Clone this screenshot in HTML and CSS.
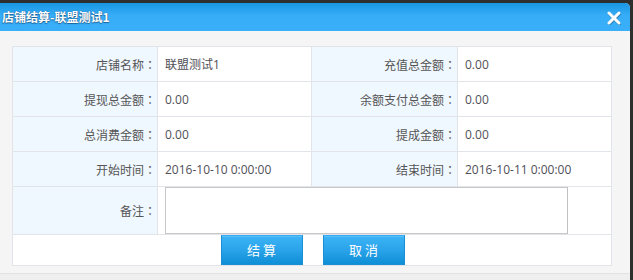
FILE: index.html
```html
<!DOCTYPE html>
<html>
<head>
<meta charset="utf-8">
<link rel="stylesheet" href="styles.css">
</head>
<body>
<div class="dialog">
  <div class="titlebar">
    <span class="title">店铺结算-联盟测试1</span>
    <svg class="close" width="14" height="14" viewBox="0 0 14 14"><path d="M2 2 L12 12 M12 2 L2 12" stroke="#000" stroke-opacity="0.25" stroke-width="3.4" stroke-linecap="round" transform="translate(0.5,0.8)"/><path d="M2 2 L12 12 M12 2 L2 12" stroke="#fff" stroke-width="3" stroke-linecap="round"/></svg>
  </div>
  <div class="content">
    <div class="grid">
      <div class="lab">店铺名称<span class="colon">：</span></div><div class="val">联盟测试1</div>
      <div class="lab">充值总金额<span class="colon">：</span></div><div class="val">0.00</div>
      <div class="lab">提现总金额<span class="colon">：</span></div><div class="val">0.00</div>
      <div class="lab">余额支付总金额<span class="colon">：</span></div><div class="val">0.00</div>
      <div class="lab">总消费金额<span class="colon">：</span></div><div class="val">0.00</div>
      <div class="lab">提成金额<span class="colon">：</span></div><div class="val">0.00</div>
      <div class="lab">开始时间<span class="colon">：</span></div><div class="val">2016-10-10 0:00:00</div>
      <div class="lab">结束时间<span class="colon">：</span></div><div class="val">2016-10-11 0:00:00</div>
      <div class="lab remark-lab">备注<span class="colon">：</span></div>
      <div class="val remark"><textarea class="memo"></textarea></div>
      <div class="actions">
        <button class="btn">结 算</button>
        <button class="btn">取 消</button>
      </div>
    </div>
  </div>
  <div class="foot"></div>
</div>
</body>
</html>
```
FILE: styles.css
```css
html, body {
  margin: 0;
  padding: 0;
}
body {
  background: #2e2e2e;
  width: 633px;
  height: 280px;
  overflow: hidden;
  font-family: "Open Sans", "Noto Sans CJK SC", sans-serif;
  font-size: 12px;
  color: #555;
}
.dialog {
  margin-top: 3px;
  width: 630px;
  height: 277px;
  background: #f5f5f5;
  border-radius: 0 5px 0 0;
  overflow: hidden;
  display: flex;
  flex-direction: column;
}
.titlebar {
  height: 28px;
  background: linear-gradient(#1896e2, #37adf8 45%, #3aaff9);
  display: flex;
  align-items: center;
  justify-content: space-between;
  padding: 0 9px 0 2px;
}
.title {
  color: #fff;
  font-family: "Noto Sans CJK SC", sans-serif;
  font-weight: bold;
  font-size: 12px;
  line-height: 28px;
  text-shadow: 0 0 1px rgba(0, 40, 80, 0.7), 0 1px 1px rgba(0, 40, 80, 0.5);
}
.close {
  display: block;
  margin-top: 1px;
}
.content {
  padding: 15px 18px 0 12px;
  flex: 1;
}
.grid {
  display: grid;
  grid-template-columns: 144px 153px 145px 153px;
  grid-template-rows: 34px 34px 34px 34px 47px 30px;
  gap: 1px;
  border: 1px solid #e1e4e8;
  background: #e1e4e8;
  width: 598px;
}
.lab {
  background: #f0f8ff;
  padding-right: 1px;
  display: flex;
  align-items: center;
  justify-content: flex-end;
  white-space: nowrap;
  font-family: "Noto Sans CJK SC", sans-serif;
}
.colon {
  font-family: "Noto Sans CJK JP", sans-serif;
}
.val {
  background: #fff;
  padding-left: 7px;
  display: flex;
  align-items: center;
  white-space: nowrap;
  color: #4f4f58;
}
.remark {
  grid-column: 2 / 5;
  align-items: stretch;
}
.memo {
  width: 403px;
  height: 47px;
  box-sizing: border-box;
  margin: 0;
  border: 1px solid #c8c8c8;
  border-right-color: #c0c0c0;
  background: #fff;
  resize: none;
  padding: 0;
  font-family: inherit;
}
.actions {
  grid-column: 1 / 5;
  background: #fff;
  display: flex;
  justify-content: center;
  gap: 20px;
  padding-left: 1px;
}
.btn {
  width: 82px;
  height: 30px;
  margin: 0;
  padding: 0;
  border: 1px solid #1a8fd4;
  border-top-color: #3aaaf0;
  background: linear-gradient(#3db4f6, #2aa3ea 50%, #0f8fd6);
  color: #fff;
  font-family: "Noto Sans CJK SC", sans-serif;
  font-size: 13px;
  line-height: 28px;
  box-shadow: inset 0 1px 0 rgba(255, 255, 255, 0.15);
}
.foot {
  height: 6px;
  border-top: 1px solid #e2e2e2;
  background: #efefef;
}
```
